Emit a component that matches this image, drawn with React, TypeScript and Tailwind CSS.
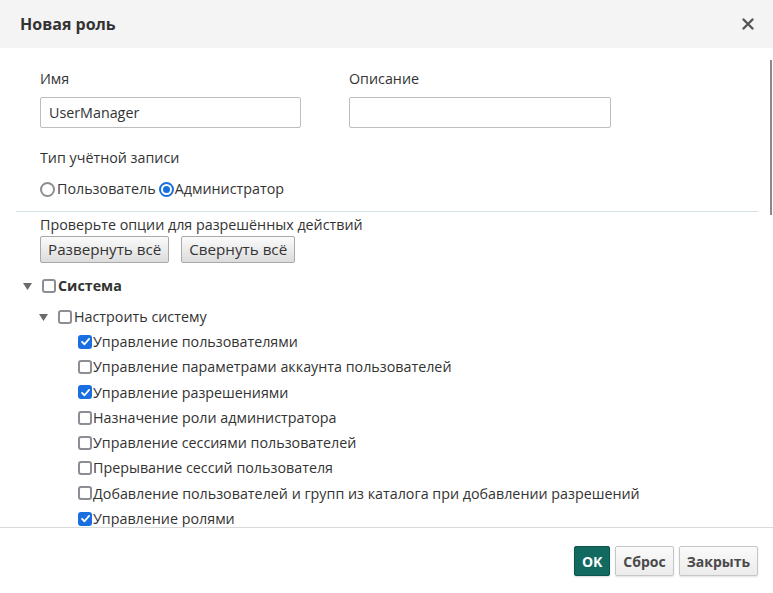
import React from "react"

const font = { fontFamily: '"Open Sans", "Noto Sans", sans-serif' }

type Leaf = { label: string; checked: boolean }

const leaves: Leaf[] = [
  { label: "Управление пользователями", checked: true },
  { label: "Управление параметрами аккаунта пользователей", checked: false },
  { label: "Управление разрешениями", checked: true },
  { label: "Назначение роли администратора", checked: false },
  { label: "Управление сессиями пользователей", checked: false },
  { label: "Прерывание сессий пользователя", checked: false },
  { label: "Добавление пользователей и групп из каталога при добавлении разрешений", checked: false },
  { label: "Управление ролями", checked: true },
]

const Checkbox = ({ checked }: { checked: boolean }) =>
  checked ? (
    <span className="w-[14px] h-[14px] shrink-0 rounded-[3px] bg-[#1a6fe0] flex items-center justify-center">
      <svg width="11" height="11" viewBox="0 0 12 12">
        <path d="M2.2 6.3 L4.9 9 L9.9 3.2" fill="none" stroke="#fff" strokeWidth="2" strokeLinecap="round" strokeLinejoin="round" />
      </svg>
    </span>
  ) : (
    <span className="w-[14px] h-[14px] shrink-0 rounded-[3px] border-2 border-[#8d8d96] bg-white" />
  )

const Radio = ({ checked }: { checked: boolean }) =>
  checked ? (
    <span className="w-[15px] h-[15px] shrink-0 rounded-full border-2 border-[#1a6fe0] flex items-center justify-center">
      <span className="w-[7px] h-[7px] rounded-full bg-[#1a6fe0]" />
    </span>
  ) : (
    <span className="w-[15px] h-[15px] shrink-0 rounded-full border-2 border-[#8d8d96]" />
  )

const Triangle = () => (
  <svg width="9" height="7" viewBox="0 0 9 7" className="shrink-0">
    <path d="M0 0 H9 L4.5 7 Z" fill="#6b6b6b" />
  </svg>
)

export default function App() {
  return (
    <div className="w-[773px] h-[593px] bg-white flex flex-col text-[#333]" style={font}>
      {/* header */}
      <div className="h-[48px] shrink-0 bg-[#f4f4f4] flex items-center justify-between pl-5 pr-[19px]">
        <span className="text-[16px] font-bold text-[#333]">Новая роль</span>
        <svg width="12" height="12" viewBox="0 0 12 12">
          <path d="M1.5 1.5 L10.5 10.5 M10.5 1.5 L1.5 10.5" stroke="#555" strokeWidth="2.4" strokeLinecap="round" />
        </svg>
      </div>

      {/* body */}
      <div className="relative flex-1 overflow-hidden">
        <div className="absolute right-[1px] top-[12px] w-[2px] h-[155px] bg-[#8a8a8a]" />
        <div className="px-4 pt-[21px]">
          <div className="pl-6 flex gap-12 text-[14.3px]">
            <div className="flex flex-col">
              <span className="leading-5">Имя</span>
              <div className="mt-2 w-[261px] h-[31px] border border-[#bdbdbd] rounded-[2px] flex items-center px-[8px]">
                UserManager
              </div>
            </div>
            <div className="flex flex-col">
              <span className="leading-5">Описание</span>
              <div className="mt-2 w-[262px] h-[31px] border border-[#bdbdbd] rounded-[2px]" />
            </div>
          </div>

          <div className="pl-6 mt-5 text-[14.3px] leading-5">Тип учётной записи</div>
          <div className="pl-6 mt-[11px] h-5 flex items-center text-[14.3px]">
            <Radio checked={false} />
            <span className="ml-[2px] mr-[3px]">Пользователь</span>
            <Radio checked={true} />
            <span className="ml-[1px]">Администратор</span>
          </div>

          <div className="mt-[12px] h-px bg-[#d5e0e4] mr-[-1px]" />

          <div className="pl-6 mt-[3px] text-[14.3px] leading-5">Проверьте опции для разрешённых действий</div>
          <div className="pl-6 mt-[1px] flex gap-3">
            <button className="h-[27px] px-[7px] border border-[#a9a9a9] rounded-[2px] bg-gradient-to-b from-[#fbfbfb] to-[#dcdcdc] text-[15.2px] text-[#333]">
              Развернуть всё
            </button>
            <button className="h-[27px] px-[7px] border border-[#a9a9a9] rounded-[2px] bg-gradient-to-b from-[#fbfbfb] to-[#dcdcdc] text-[15.2px] text-[#333]">
              Свернуть всё
            </button>
          </div>

          {/* tree */}
          <div className="mt-[10px] text-[14.3px]">
            <div className="h-[26px] flex items-center pl-[7px]">
              <Triangle />
              <span className="ml-[10px] flex">
                <Checkbox checked={false} />
              </span>
              <span className="ml-[2px] font-bold">Система</span>
            </div>
            <div className="mt-[6px] h-[24px] flex items-center pl-[23px]">
              <Triangle />
              <span className="ml-[10px] flex">
                <Checkbox checked={false} />
              </span>
              <span className="ml-[2px]">Настроить систему</span>
            </div>
            {leaves.map((leaf) => (
              <div key={leaf.label} className="h-[25.3px] flex items-center pl-[62px]">
                <Checkbox checked={leaf.checked} />
                <span className="ml-[1px] whitespace-nowrap">{leaf.label}</span>
              </div>
            ))}
          </div>
        </div>
      </div>

      {/* footer */}
      <div className="h-[66px] shrink-0 border-t border-[#dadada] flex items-start justify-end gap-[5px] pt-[18px] pr-[15px]">
        <button className="h-[30px] px-[7px] bg-[#11695f] border border-[#0b544c] rounded-[2px] text-white text-[14px] font-bold shadow-[0_1px_2px_rgba(0,0,0,0.15)]">
          OK
        </button>
        <button className="h-[30px] px-[7px] bg-gradient-to-b from-[#fafafa] to-[#ececec] border border-[#c6c6c6] rounded-[2px] text-[#4a4a4a] text-[14px] font-bold shadow-[0_1px_2px_rgba(0,0,0,0.12)]">
          Сброс
        </button>
        <button className="h-[30px] px-[7px] bg-gradient-to-b from-[#fafafa] to-[#ececec] border border-[#c6c6c6] rounded-[2px] text-[#4a4a4a] text-[14px] font-bold shadow-[0_1px_2px_rgba(0,0,0,0.12)]">
          Закрыть
        </button>
      </div>
    </div>
  )
}
